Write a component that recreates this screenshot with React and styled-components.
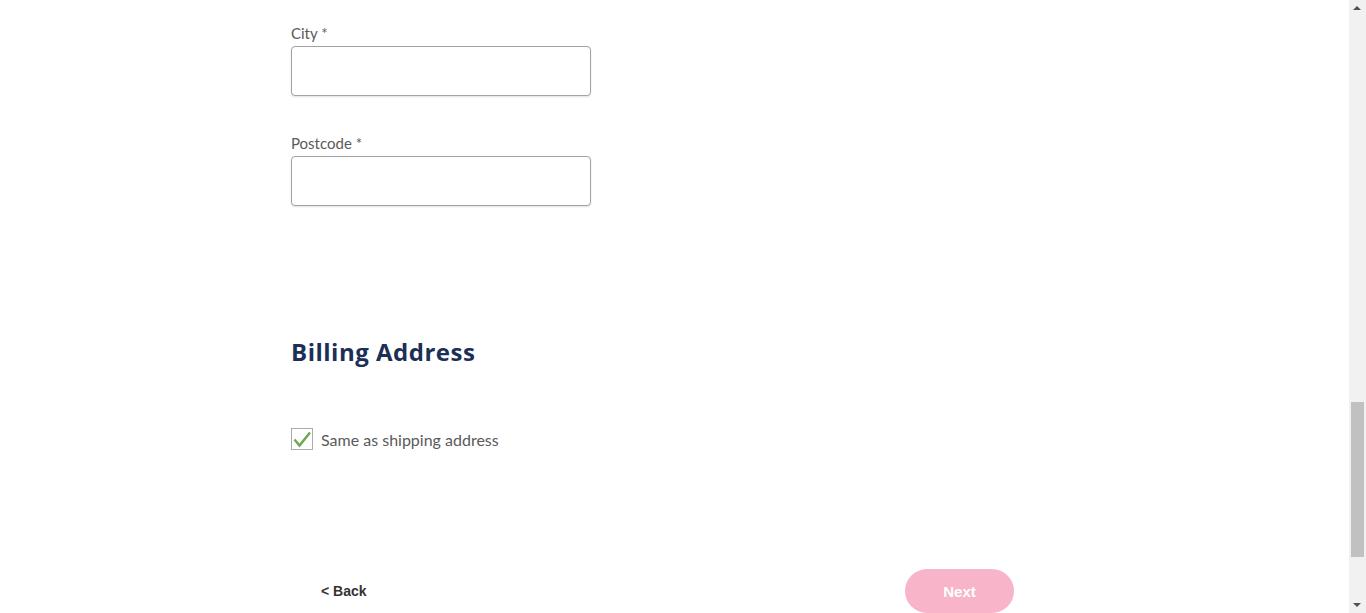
import React from 'react';
import styled, { createGlobalStyle } from 'styled-components';

const GlobalStyle = createGlobalStyle`
  html, body {
    margin: 0;
    padding: 0;
    background: #fff;
    overflow: hidden;
  }
`;

const Page = styled.div`
  width: 1349px;
  height: 613px;
  padding: 23px 0 0 291px;
  box-sizing: border-box;
  font-family: Lato, 'Open Sans', sans-serif;
`;

const Field = styled.div`
  display: flex;
  flex-direction: column;
  width: 300px;
  margin-bottom: 37px;
`;

const Label = styled.label`
  font-size: 15px;
  line-height: 20px;
  color: #5a5a5a;
  margin-bottom: 3px;
`;

const Input = styled.input`
  box-sizing: border-box;
  width: 300px;
  height: 50px;
  border: 1px solid #a3a3a3;
  border-radius: 4px;
  box-shadow: 0 1px 2px rgba(0, 0, 0, 0.12);
  background: #fff;
  padding: 0 12px;
  font-size: 15px;
  font-family: inherit;
  outline: none;
`;

const Heading = styled.h2`
  margin: 131px 0 0;
  font-family: 'Open Sans', sans-serif;
  font-weight: 700;
  font-size: 24px;
  line-height: 30px;
  color: #1b2f57;
  letter-spacing: 0.5px;
`;

const CheckRow = styled.label`
  display: flex;
  align-items: center;
  gap: 8px;
  margin-top: 61px;
  font-size: 16px;
  color: #5a5a5a;
`;

const Box = styled.span`
  width: 22px;
  height: 22px;
  box-sizing: border-box;
  border: 1px solid #ababab;
  display: flex;
  align-items: center;
  justify-content: center;
  background: #fff;
`;

const Actions = styled.div`
  display: flex;
  justify-content: space-between;
  align-items: center;
  width: 723px;
  margin-top: 119px;
`;

const BackButton = styled.button`
  border: none;
  background: none;
  padding: 0 0 0 30px;
  font-family: 'Liberation Sans', Arial, sans-serif;
  font-weight: 700;
  font-size: 14px;
  color: #333;
  cursor: pointer;
`;

const NextButton = styled.button`
  width: 109px;
  height: 44px;
  border: none;
  border-radius: 22px;
  background: #f8b4c9;
  color: #fff;
  font-family: 'Liberation Sans', Arial, sans-serif;
  font-weight: 700;
  font-size: 15px;
  cursor: pointer;
`;

const Scrollbar = styled.div`
  position: fixed;
  top: 0;
  right: 0;
  width: 17px;
  height: 613px;
  background: #f1f1f1;
`;

const Thumb = styled.div`
  position: absolute;
  left: 2px;
  top: 402px;
  width: 13px;
  height: 155px;
  background: #c1c1c1;
`;

const Arrow = styled.div`
  position: absolute;
  left: 4px;
  width: 0;
  height: 0;
  border-left: 4px solid transparent;
  border-right: 4px solid transparent;
  ${x => (x.down ? 'bottom: 6px; border-top: 4px solid #505050;' : 'top: 6px; border-bottom: 4px solid #505050;')}
`;

const fields = ['City', 'Postcode'];

const App = () => (
  <>
    <GlobalStyle />
    <Page>
      {fields.map(name => (
        <Field key={name}>
          <Label>{name} *</Label>
          <Input type="text" />
        </Field>
      ))}
      <Heading>Billing Address</Heading>
      <CheckRow>
        <Box>
          <svg width="20" height="18" viewBox="0 0 20 18">
            <path d="M2.5 9.5 L7.5 15.5 L18 2.5" fill="none" stroke="#6aa84f" strokeWidth="2.4" />
          </svg>
        </Box>
        Same as shipping address
      </CheckRow>
      <Actions>
        <BackButton>&lt; Back</BackButton>
        <NextButton>Next</NextButton>
      </Actions>
    </Page>
    <Scrollbar>
      <Arrow />
      <Thumb />
      <Arrow down />
    </Scrollbar>
  </>
);

export default App;
